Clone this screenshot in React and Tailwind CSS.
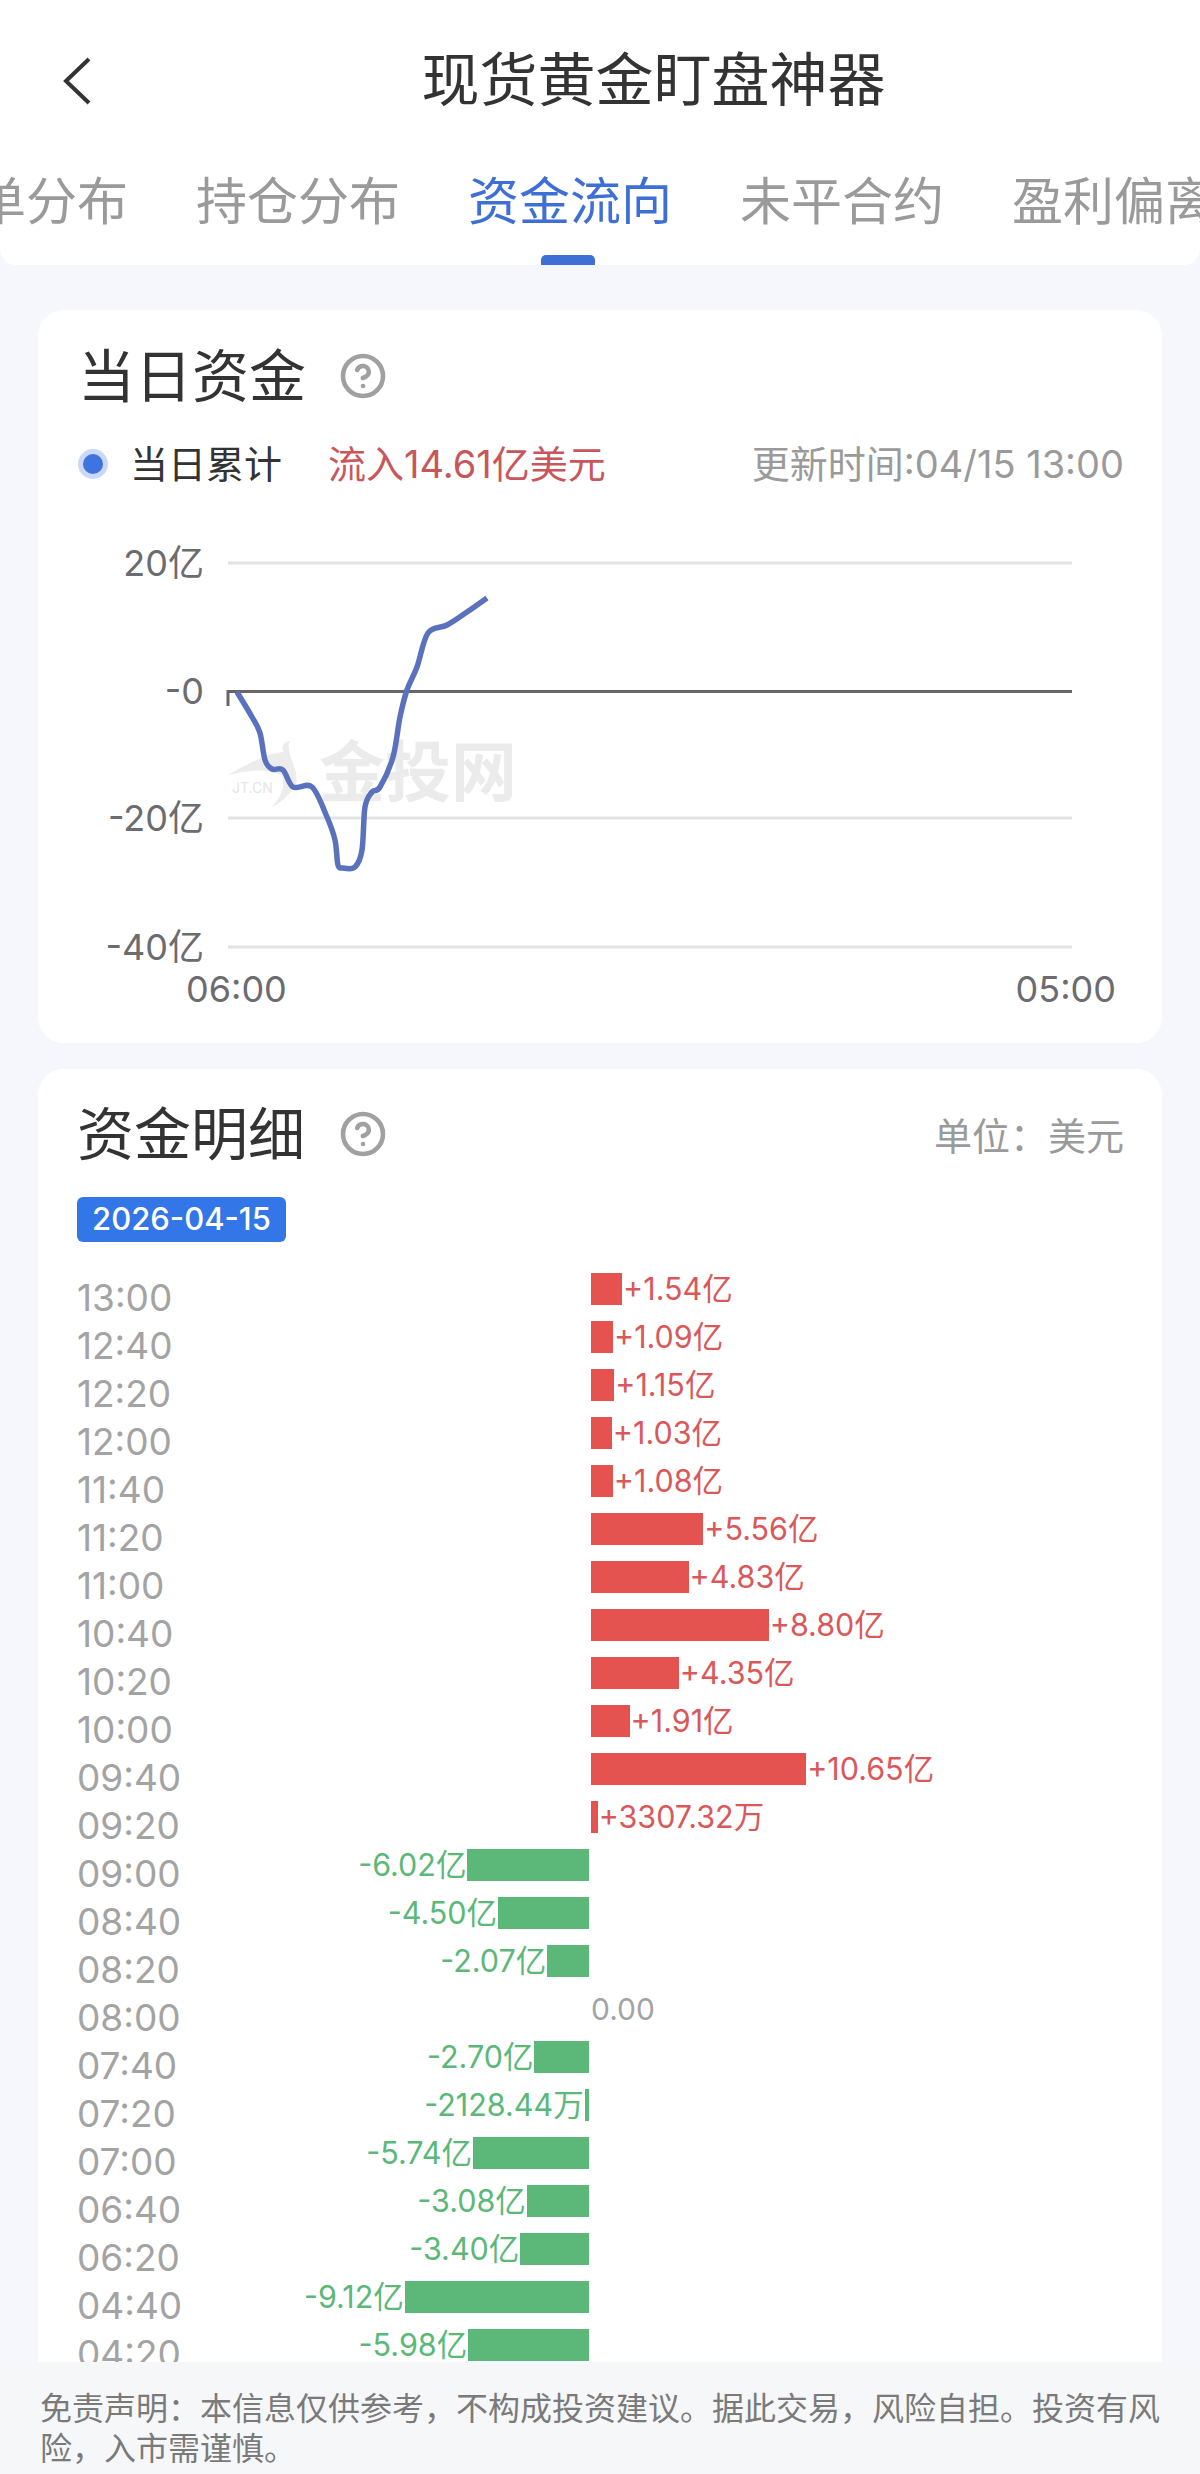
import React from 'react';
import { CircleHelp } from 'lucide-react';

const tabs = ['挂单分布', '持仓分布', '资金流向', '未平合约', '盈利偏离'];

// value is in 亿, drives the bar width
const rows = [
  ['13:00', 1.54, '+1.54亿'],
  ['12:40', 1.09, '+1.09亿'],
  ['12:20', 1.15, '+1.15亿'],
  ['12:00', 1.03, '+1.03亿'],
  ['11:40', 1.08, '+1.08亿'],
  ['11:20', 5.56, '+5.56亿'],
  ['11:00', 4.83, '+4.83亿'],
  ['10:40', 8.8, '+8.80亿'],
  ['10:20', 4.35, '+4.35亿'],
  ['10:00', 1.91, '+1.91亿'],
  ['09:40', 10.65, '+10.65亿'],
  ['09:20', 0.33, '+3307.32万'],
  ['09:00', -6.02, '-6.02亿'],
  ['08:40', -4.5, '-4.50亿'],
  ['08:20', -2.07, '-2.07亿'],
  ['08:00', 0, '0.00'],
  ['07:40', -2.7, '-2.70亿'],
  ['07:20', -0.21, '-2128.44万'],
  ['07:00', -5.74, '-5.74亿'],
  ['06:40', -3.08, '-3.08亿'],
  ['06:20', -3.4, '-3.40亿'],
  ['04:40', -9.12, '-9.12亿'],
  ['04:20', -5.98, '-5.98亿'],
];

const BAR_SCALE = 20.2;

const linePoints = [
  [237, 692], [252, 717], [260, 733], [265, 760], [272, 769], [283, 770], [293, 787], [312, 787],
  [327, 817], [335, 840], [338, 865], [343, 868], [355, 867], [362, 850], [365, 807], [372, 792],
  [380, 787], [393, 757], [400, 717], [407, 690], [417, 667], [428, 633], [447, 625], [467, 612], [487, 598],
];

// catmull-rom through the points
const smoothPath = (pts) => {
  let d = `M${pts[0][0]} ${pts[0][1]}`;
  for (let i = 0; i < pts.length - 1; i++) {
    const p0 = pts[i - 1] || pts[i];
    const p1 = pts[i];
    const p2 = pts[i + 1];
    const p3 = pts[i + 2] || p2;
    const c1x = p1[0] + (p2[0] - p0[0]) / 6;
    const c1y = p1[1] + (p2[1] - p0[1]) / 6;
    const c2x = p2[0] - (p3[0] - p1[0]) / 6;
    const c2y = p2[1] - (p3[1] - p1[1]) / 6;
    d += ` C${c1x} ${c1y} ${c2x} ${c2y} ${p2[0]} ${p2[1]}`;
  }
  return d;
};

const Chart = () => (
  <svg viewBox="38 530 1123 480" className="mt-[42px] block h-[480px] w-[1123px]">
    {/* watermark */}
    <path d="M228 775 C250 762 272 752 284 752 C280 748 284 741 290 741 C284 752 300 770 296 784 C290 796 276 806 272 807 C280 798 286 788 282 776 C268 768 246 770 228 775 Z" fill="#ececec" />
    <text x="232" y="793" fontSize="14" fill="#e6e6e6">JT.CN</text>
    <text x="319" y="796" fontSize="66" fontWeight="700" fill="#ebebeb">金投网</text>

    {[563, 818, 947].map((y) => (
      <line key={y} x1="228" x2="1072" y1={y} y2={y} stroke="#e3e3e3" strokeWidth="3" />
    ))}
    <path d="M228 706 V691.5 H1072" fill="none" stroke="#666" strokeWidth="3" />

    {[['20亿', 563], ['-0', 691], ['-20亿', 818], ['-40亿', 947]].map(([label, y]) => (
      <text key={label} x="204" y={y + 13} textAnchor="end" fontSize="36" fill="#6b6b70">{label}</text>
    ))}
    <text x="186" y="1002" fontSize="36" fill="#6b6b70">06:00</text>
    <text x="1116" y="1002" textAnchor="end" fontSize="36" fill="#6b6b70">05:00</text>

    <path d={smoothPath(linePoints)} fill="none" stroke="#5a72bd" strokeWidth="5.5" />
  </svg>
);

const Row = ({ time, value, label }) => {
  const width = Math.abs(value) * BAR_SCALE;
  return (
    <div className="flex h-12 items-center">
      <span className="w-[200px] shrink-0 translate-y-2 text-[37px] leading-none text-[#a3a3a3]">{time}</span>
      <div className="flex w-[314px] shrink-0 items-center justify-end gap-[1px] pr-[2px]">
        {value < 0 && (
          <>
            <span className="text-[30.5px] leading-none text-[#5bb878]">{label}</span>
            <div className="h-8 bg-[#5bb878]" style={{ width }} />
          </>
        )}
      </div>
      <div className="flex items-center gap-[1px]">
        {value > 0 && (
          <>
            <div className="h-8 bg-[#e4534f]" style={{ width }} />
            <span className="text-[30.5px] leading-none text-[#d9585a]">{label}</span>
          </>
        )}
        {value === 0 && <span className="text-[30px] leading-none text-[#a3a3a3]">{label}</span>}
      </div>
    </div>
  );
};

const App = () => {
  return (
    <div className="flex h-[2474px] w-full flex-col overflow-hidden bg-[#f5f7fc] font-['Inter','Noto_Sans_CJK_SC',sans-serif]">
      {/* Header */}
      <div className="h-[265px] shrink-0 overflow-hidden rounded-b-[16px] bg-white">
        <div className="relative flex h-[160px] items-center justify-center pl-[107px]">
          <svg width="30" height="48" viewBox="0 0 30 48" fill="none" className="absolute left-[62px] top-[57px]">
            <path d="M27 2 L4 24 L27 46" stroke="#333" strokeWidth="4" />
          </svg>
          <h1 className="text-[58px] font-normal leading-none text-[#333]">现货黄金盯盘神器</h1>
        </div>
        <div className="-ml-[76px] flex w-[1400px] gap-[68px] pt-[12px]">
          {tabs.map((tab, i) => (
            <div key={tab} className="relative shrink-0">
              <span className={`text-[51px] leading-[60px] ${i === 2 ? 'text-[#3d6fd6]' : 'text-[#9a9a9a]'}`}>{tab}</span>
              {i === 2 && <div className="absolute left-[73px] top-[83px] h-[10px] w-[54px] rounded-t-[5px] bg-[#3d6fd6]" />}
            </div>
          ))}
        </div>
      </div>

      <div className="flex-1 overflow-hidden px-[38px]">
        {/* 当日资金 */}
        <div className="mt-[45px] rounded-[26px] bg-white pb-[33px] pt-[40px]">
          <div className="flex h-[52px] items-center pl-[40px]">
            <h2 className="text-[57px] font-normal leading-none text-[#333]">当日资金</h2>
            <CircleHelp size={48} color="#a0a0a0" strokeWidth={2.3} className="ml-[33px]" />
          </div>
          <div className="mt-[36px] flex h-[50px] translate-y-[1px] items-center pl-[40px] pr-[38px]">
            <span className="flex h-[30px] w-[30px] items-center justify-center rounded-full bg-[#c9d9f7]">
              <span className="h-5 w-5 rounded-full bg-[#3f73e0]" />
            </span>
            <span className="ml-[22px] text-[38px] text-[#333]">当日累计</span>
            <span className="ml-[46px] text-[38px] text-[#c9565a]">流入14.61亿美元</span>
            <span className="ml-auto text-[38px] text-[#9a9a9a]">更新时间:04/15 13:00</span>
          </div>
          <Chart />
        </div>

        {/* 资金明细 */}
        <div className="mt-[26px] rounded-t-[26px] bg-white pl-[39px] pr-[38px] pt-[39px]">
          <div className="flex h-[52px] items-center">
            <h2 className="text-[57px] font-normal leading-none text-[#333]">资金明细</h2>
            <CircleHelp size={48} color="#a0a0a0" strokeWidth={2.3} className="ml-[34px]" />
            <span className="ml-auto translate-y-[2px] text-[38px] text-[#9a9a9a]">单位：美元</span>
          </div>
          <div className="mt-[37px] flex h-[45px] w-[209px] items-center justify-center rounded-[6px] bg-[#3276e8] text-[31px] font-medium text-white">2026-04-15</div>
          <div className="mt-[23px]">
            {rows.map(([time, value, label]) => (
              <Row key={time} time={time} value={value} label={label} />
            ))}
          </div>
        </div>
      </div>

      <div className="h-[112px] shrink-0 bg-[#f6f7f9] px-[40px] pt-[27px] text-[32px] leading-[40px] text-[#7a7a7a]">
        免责声明：本信息仅供参考，不构成投资建议。据此交易，风险自担。投资有风险，入市需谨慎。
      </div>
    </div>
  );
};

export default App;
